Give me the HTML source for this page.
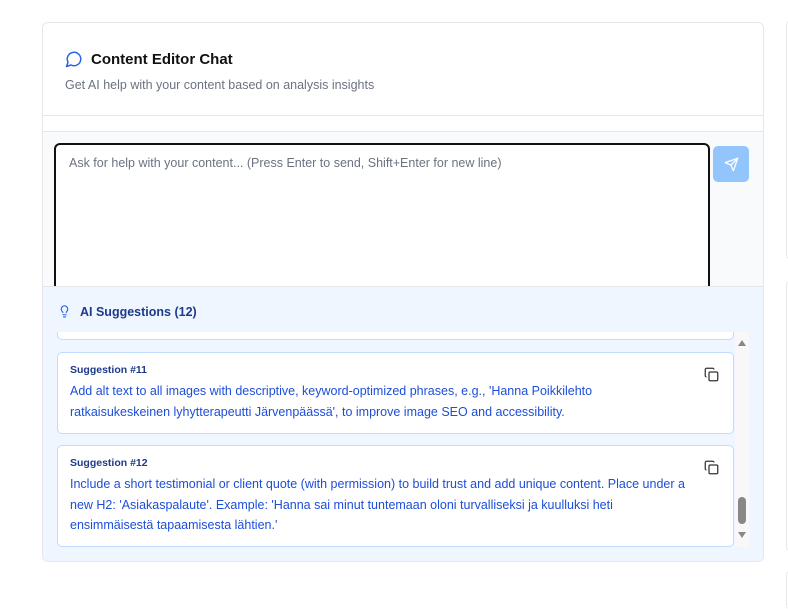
<!DOCTYPE html>
<html><head><style>
*{box-sizing:border-box;margin:0;padding:0}
body{width:788px;height:595px;background:#fff;font-family:"Liberation Sans",sans-serif;position:relative;overflow:hidden}
.card{position:absolute;left:42px;top:22px;width:722px;height:540px;border:1px solid #e5e7eb;border-radius:6px;overflow:hidden;background:#fff}
.side{position:absolute;left:786px;width:10px;border:1px solid #e5e7eb;border-radius:6px}
.hdr{height:93px;border-bottom:1px solid #e5e7eb;padding:27px 22px 0}
.title{font-size:15px;font-weight:bold;color:#111;display:flex;align-items:center;gap:8px}
.sub{font-size:12.5px;color:#6b7280;margin-top:10px}
.band{height:16px;border-bottom:1px solid #e5e7eb}
.gray{position:absolute;top:109px;left:0;right:0;height:155px;background:#f9fafb}
.ta{position:absolute;left:11px;top:120px;width:656px;height:150px;border:2px solid #111;border-radius:6px;background:#fff;padding:11px 13px;font-size:12.5px;color:#6b7280}
.send{position:absolute;left:670px;top:123px;width:36px;height:36px;border-radius:5px;background:#93c5fd;display:flex;align-items:center;justify-content:center}
.sug{position:absolute;top:263px;left:0;right:0;bottom:0;background:#eff6ff;border-top:1px solid #e5e7eb}
.sh{position:absolute;left:15px;top:17px;font-size:12.5px;font-weight:bold;color:#1e3a8a;display:flex;align-items:center;gap:9px}
.scroll{position:absolute;left:14px;top:45px;width:692px;height:215px;overflow:hidden}
.sb{position:absolute;right:0;top:0;width:14px;height:215px;background:#f8f8f8}
.it{position:absolute;left:0;width:677px;background:#fff;border:1px solid #bfdbfe;border-radius:5px;padding:11px 12px}
.lbl{font-size:10.5px;color:#1e3a8a;font-weight:bold}
.tx{font-size:12.5px;color:#1d4ed8;line-height:20.5px;margin-top:5px;width:618px}
.cp{position:absolute;right:14px;top:14px}
</style></head><body>
<div class="side" style="top:20px;height:240px"></div>
<div class="side" style="top:280px;height:272px"></div>
<div class="side" style="top:570px;height:40px"></div>
<div class="card">
 <div class="hdr">
  <div class="title"><svg width="18" height="18" viewBox="0 0 24 24" fill="none" stroke="#2563eb" stroke-width="2" stroke-linecap="round" stroke-linejoin="round"><path d="M7.9 20A9 9 0 1 0 4 16.1L2 22Z"/></svg>Content Editor Chat</div>
  <div class="sub">Get AI help with your content based on analysis insights</div>
 </div>
 <div class="band"></div>
 <div class="gray"></div>
 <div class="ta">Ask for help with your content... (Press Enter to send, Shift+Enter for new line)</div>
 <div class="send"><svg width="15" height="15" viewBox="0 0 24 24" fill="none" stroke="#fff" stroke-width="2" stroke-linejoin="round"><path d="M22 2 11 13M22 2l-7 20-4-9-9-4Z"/></svg></div>
 <div class="sug">
  <div class="sh"><svg width="13" height="15" viewBox="0 0 24 24" fill="none" stroke="#2563eb" stroke-width="2" stroke-linecap="round"><path d="M9 18h6M10 22h4M15 14c.2-1 .7-1.7 1.5-2.5A6 6 0 1 0 6 8c0 1 .2 2.2 1.5 3.5.7.7 1.3 1.5 1.5 2.5"/></svg>AI Suggestions (12)</div>
  <div class="scroll">
   <div class="it" style="top:-40px;height:48px"></div>
   <div class="it" style="top:20px;height:82px"><div class="lbl">Suggestion #11</div><div class="tx">Add alt text to all images with descriptive, keyword-optimized phrases, e.g., 'Hanna Poikkilehto ratkaisukeskeinen lyhytterapeutti Järvenpäässä', to improve image SEO and accessibility.</div>
    <svg class="cp" width="15" height="15" viewBox="0 0 24 24" fill="none" stroke="#333" stroke-width="2"><rect x="8" y="8" width="14" height="14" rx="2"/><path d="M4 16c-1 0-2-1-2-2V4c0-1 1-2 2-2h10c1 0 2 1 2 2"/></svg></div>
   <div class="it" style="top:113px;height:102px"><div class="lbl">Suggestion #12</div><div class="tx">Include a short testimonial or client quote (with permission) to build trust and add unique content. Place under a new H2: 'Asiakaspalaute'. Example: 'Hanna sai minut tuntemaan oloni turvalliseksi ja kuulluksi heti ensimmäisestä tapaamisesta lähtien.'</div>
    <svg class="cp" width="15" height="15" viewBox="0 0 24 24" fill="none" stroke="#333" stroke-width="2"><rect x="8" y="8" width="14" height="14" rx="2"/><path d="M4 16c-1 0-2-1-2-2V4c0-1 1-2 2-2h10c1 0 2 1 2 2"/></svg></div>
   <div class="sb">
    <div style="position:absolute;left:3px;top:8px;border:4px solid transparent;border-bottom:6px solid #888;border-top:0"></div>
    <div style="position:absolute;left:3px;top:165px;width:8px;height:27px;border-radius:4px;background:#888"></div>
    <div style="position:absolute;left:3px;top:200px;border:4px solid transparent;border-top:6px solid #888;border-bottom:0"></div>
   </div>
  </div>
 </div>
</div>
</body></html>
